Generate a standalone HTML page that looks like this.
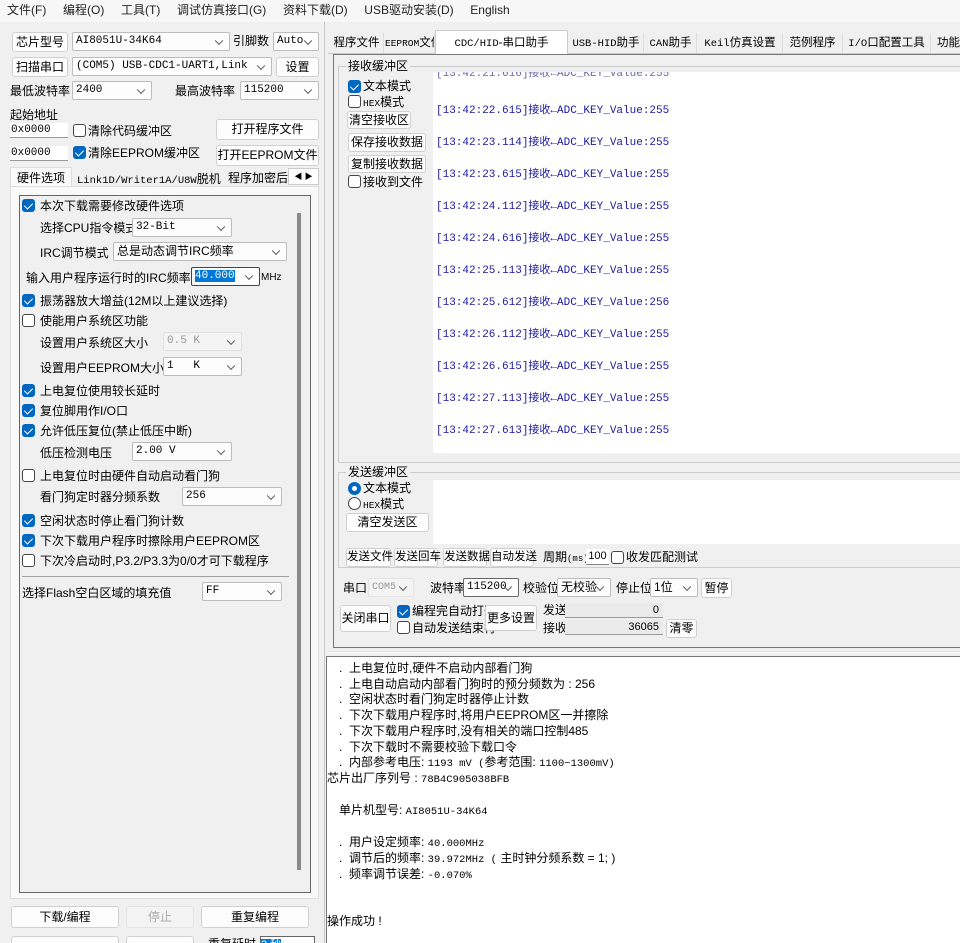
<!DOCTYPE html>
<html><head><meta charset="utf-8"><style>
*{margin:0;padding:0;box-sizing:border-box}
html,body{width:960px;height:943px;overflow:hidden}
body{background:#f0f0f0;font-family:"Liberation Sans","Noto Sans CJK SC",sans-serif;font-size:12px;color:#000;position:relative}
.a{position:absolute;white-space:nowrap;line-height:14px}
.btn{position:absolute;background:#fdfdfd;border:1px solid #d0d0d0;border-radius:3px;text-align:center;white-space:nowrap;font-size:12px}
.cb{position:absolute;background:#fdfdfd;border:1px solid #bcbcbc;border-radius:2px;font-family:"Liberation Mono","Noto Sans CJK SC",monospace;font-size:11px;padding-left:3px;white-space:nowrap;overflow:hidden}
.cb:after{content:"";position:absolute;right:7px;top:50%;width:5px;height:5px;border-right:1px solid #555;border-bottom:1px solid #555;transform:translateY(-70%) rotate(45deg)}
.ck{position:absolute;width:13px;height:13px;border:1px solid #444;border-radius:3px;background:#fff}
.ck.on{background:#0067c0;border-color:#0067c0}
.ck.on:after{content:"";position:absolute;left:3px;top:1px;width:4px;height:7px;border-right:1.5px solid #fff;border-bottom:1.5px solid #fff;transform:rotate(45deg)}
.ed{position:absolute;background:#fff;border-bottom:1px solid #999;font-family:"Liberation Mono","Noto Sans CJK SC",monospace;font-size:11px;padding-left:1px;line-height:14px}
.tab{position:absolute;top:33px;height:20px;line-height:20px;font-size:11.5px;text-align:center;border-right:1px solid #ddd;white-space:nowrap;overflow:hidden}
.rl{position:absolute;left:436px;color:#1a1a9e;font-family:"Liberation Mono","Noto Sans CJK SC",monospace;font-size:11px;white-space:nowrap}
.lg{position:absolute;white-space:nowrap;font-size:12px;line-height:15px}
.m{font-family:"Liberation Mono","Noto Sans CJK SC",monospace;font-size:10.5px}
</style></head><body>
<div class="a" style="left:0;top:0;width:960px;height:22px;background:#f7f7f7"></div>
<div class="a" style="left:7px;top:3px;font-size:12px;color:#222">文件(F)&nbsp;&nbsp;&nbsp;&nbsp;&nbsp;编程(O)&nbsp;&nbsp;&nbsp;&nbsp;&nbsp;工具(T)&nbsp;&nbsp;&nbsp;&nbsp;&nbsp;调试仿真接口(G)&nbsp;&nbsp;&nbsp;&nbsp;&nbsp;资料下载(D)&nbsp;&nbsp;&nbsp;&nbsp;&nbsp;USB驱动安装(D)&nbsp;&nbsp;&nbsp;&nbsp;&nbsp;English</div>

<div class="btn" style="left:12px;top:32px;width:56px;height:20px;line-height:18px">芯片型号</div>
<div class="cb" style="left:72px;top:32px;width:158px;height:19px;line-height:17px">AI8051U-34K64</div>
<div class="a" style="left:233px;top:34px">引脚数</div>
<div class="cb" style="left:273px;top:32px;width:46px;height:19px;line-height:17px">Auto</div>
<div class="btn" style="left:12px;top:57px;width:56px;height:20px;line-height:18px">扫描串口</div>
<div class="cb" style="left:72px;top:57px;width:200px;height:19px;line-height:17px">(COM5) USB-CDC1-UART1,Link</div>
<div class="btn" style="left:276px;top:57px;width:43px;height:20px;line-height:18px">设置</div>
<div class="a" style="left:10px;top:84px">最低波特率</div>
<div class="cb" style="left:72px;top:81px;width:80px;height:19px;line-height:17px">2400</div>
<div class="a" style="left:175px;top:84px">最高波特率</div>
<div class="cb" style="left:240px;top:81px;width:79px;height:19px;line-height:17px">115200</div>
<div class="a" style="left:10px;top:108px">起始地址</div>
<div class="ed" style="left:10px;top:123px;width:58px;height:15px">0x0000</div>
<div class="ck" style="left:73px;top:124px"></div>
<div class="a" style="left:88px;top:124px">清除代码缓冲区</div>
<div class="btn" style="left:216px;top:119px;width:103px;height:21px;line-height:19px">打开程序文件</div>
<div class="ed" style="left:10px;top:146px;width:58px;height:15px">0x0000</div>
<div class="ck on" style="left:73px;top:146px"></div>
<div class="a" style="left:88px;top:146px">清除EEPROM缓冲区</div>
<div class="btn" style="left:216px;top:145px;width:103px;height:21px;line-height:19px">打开EEPROM文件</div>
<div class="a" style="left:10px;top:167px;width:62px;height:20px;background:#f9f9f9;border:1px solid #ddd;border-bottom:none"></div>
<div class="a" style="left:17px;top:171px">硬件选项</div>
<div class="a" style="left:77px;top:172px"><span class="m">Link1D/Writer1A/U8W</span>脱机</div>
<div class="a" style="left:228px;top:171px;width:60px;overflow:hidden">程序加密后</div>
<div class="a" style="left:288px;top:168px;width:31px;height:17px;background:#fff;border:1px solid #ccc;font-size:8px;line-height:15px;text-align:center">◀ ▶</div>
<div class="a" style="left:10px;top:186px;width:309px;height:713px;border:1px solid #ddd;background:#f9f9f9"></div>
<div class="a" style="left:19px;top:195px;width:292px;height:698px;border:1px solid #666;background:#f0f0f0"></div>
<div class="a" style="left:297px;top:213px;width:4px;height:657px;background:#8a8a8a"></div>
<div class="ck on" style="left:22px;top:199px"></div><div class="a" style="left:40px;top:199px">本次下载需要修改硬件选项</div>
<div class="a" style="left:40px;top:221px">选择CPU指令模式</div><div class="cb" style="left:132px;top:218px;width:100px;height:19px;line-height:17px">32-Bit</div>
<div class="a" style="left:40px;top:246px">IRC调节模式</div><div class="cb" style="left:113px;top:242px;width:174px;height:19px;line-height:17px;font-family:'Liberation Sans','Noto Sans CJK SC',sans-serif;font-size:12px">总是动态调节IRC频率</div>
<div class="a" style="left:26px;top:271px">输入用户程序运行时的IRC频率</div>
<div class="cb" style="left:191px;top:267px;width:69px;height:19px;line-height:17px;border-color:#444"><span style="background:#0078d7;color:#fff">40.000</span></div>
<div class="a" style="left:261px;top:271px;font-size:10px">MHz</div>
<div class="ck on" style="left:22px;top:294px"></div><div class="a" style="left:40px;top:294px">振荡器放大增益(12M以上建议选择)</div>
<div class="ck" style="left:22px;top:314px"></div><div class="a" style="left:40px;top:314px">使能用户系统区功能</div>
<div class="a" style="left:40px;top:336px">设置用户系统区大小</div><div class="cb" style="left:163px;top:332px;width:79px;height:19px;line-height:17px;color:#999;border-color:#e0e0e0;background:#f4f4f4">0.5 K</div>
<div class="a" style="left:40px;top:361px">设置用户EEPROM大小</div><div class="cb" style="left:163px;top:357px;width:79px;height:19px;line-height:17px">1&nbsp;&nbsp;&nbsp;K</div>
<div class="ck on" style="left:22px;top:384px"></div><div class="a" style="left:40px;top:384px">上电复位使用较长延时</div>
<div class="ck on" style="left:22px;top:404px"></div><div class="a" style="left:40px;top:404px">复位脚用作I/O口</div>
<div class="ck on" style="left:22px;top:424px"></div><div class="a" style="left:40px;top:424px">允许低压复位(禁止低压中断)</div>
<div class="a" style="left:40px;top:446px">低压检测电压</div><div class="cb" style="left:132px;top:442px;width:100px;height:19px;line-height:17px">2.00 V</div>
<div class="ck" style="left:22px;top:469px"></div><div class="a" style="left:40px;top:469px">上电复位时由硬件自动启动看门狗</div>
<div class="a" style="left:40px;top:490px">看门狗定时器分频系数</div><div class="cb" style="left:182px;top:487px;width:100px;height:19px;line-height:17px">256</div>
<div class="ck on" style="left:22px;top:514px"></div><div class="a" style="left:40px;top:514px">空闲状态时停止看门狗计数</div>
<div class="ck on" style="left:22px;top:534px"></div><div class="a" style="left:40px;top:534px">下次下载用户程序时擦除用户EEPROM区</div>
<div class="ck" style="left:22px;top:554px"></div><div class="a" style="left:40px;top:554px">下次冷启动时,P3.2/P3.3为0/0才可下载程序</div>
<div class="a" style="left:22px;top:576px;width:267px;height:1px;background:#a0a0a0"></div>
<div class="a" style="left:22px;top:586px">选择Flash空白区域的填充值</div><div class="cb" style="left:202px;top:582px;width:80px;height:19px;line-height:17px">FF</div>
<div class="btn" style="left:11px;top:906px;width:108px;height:22px;line-height:20px">下载/编程</div>
<div class="btn" style="left:126px;top:906px;width:68px;height:22px;line-height:20px;color:#aaa;border-color:#e4e4e4;background:#f4f4f4">停止</div>
<div class="btn" style="left:201px;top:906px;width:108px;height:22px;line-height:20px">重复编程</div>
<div class="btn" style="left:11px;top:936px;width:108px;height:22px"></div>
<div class="btn" style="left:126px;top:936px;width:68px;height:22px"></div>
<div class="a" style="left:208px;top:937px">重复延时</div>
<div class="a" style="left:260px;top:936px;width:55px;height:16px;background:#fff;border:1px solid #666"><span style="background:#0078d7;color:#fff;font-size:11px">3 秒</span></div>
<div class="a" style="left:324px;top:22px;width:1px;height:921px;background:#c8c8c8"></div>

<div class="a" style="left:328px;top:53px;width:632px;height:1px;background:#ccc"></div>
<div class="tab" style="left:330px;width:54px">程序文件</div>
<div class="tab" style="left:385px;width:50px"><span class="m" style="font-size:9.5px">EEPROM</span>文件</div>
<div class="tab" style="left:435px;top:30px;height:24px;line-height:24px;width:133px;background:#fff;border:1px solid #ccc;border-bottom:none"><span class="m">CDC/HID</span>-串口助手</div>
<div class="tab" style="left:569px;width:75px"><span class="m">USB-HID</span>助手</div>
<div class="tab" style="left:645px;width:52px"><span class="m">CAN</span>助手</div>
<div class="tab" style="left:698px;width:85px"><span class="m">Keil</span>仿真设置</div>
<div class="tab" style="left:783px;width:60px">范例程序</div>
<div class="tab" style="left:843px;width:88px"><span class="m">I/O</span>口配置工具</div>
<div class="tab" style="left:932px;width:40px;border:none;text-align:left;padding-left:5px">功能</div>
<div class="a" style="left:333px;top:54px;width:640px;height:594px;border:1px solid #777;border-right:none;background:#f0f0f0"></div>
<div class="a" style="left:338px;top:66px;width:630px;height:397px;border:1px solid #ccc;border-right:none"></div>
<div class="a" style="left:346px;top:59px;background:#f0f0f0;padding:0 2px">接收缓冲区</div>
<div class="a" style="left:433px;top:72px;width:527px;height:381px;background:#fff;overflow:hidden">
<div class="rl" style="left:3px;top:-5px;color:#6a6aaa">[13:42:21.616]接收←ADC_KEY_Value:255</div>
</div>
<div class="rl" style="top:101px">[13:42:22.615]接收←ADC_KEY_Value:255</div>
<div class="rl" style="top:133px">[13:42:23.114]接收←ADC_KEY_Value:255</div>
<div class="rl" style="top:165px">[13:42:23.615]接收←ADC_KEY_Value:255</div>
<div class="rl" style="top:197px">[13:42:24.112]接收←ADC_KEY_Value:255</div>
<div class="rl" style="top:229px">[13:42:24.616]接收←ADC_KEY_Value:255</div>
<div class="rl" style="top:261px">[13:42:25.113]接收←ADC_KEY_Value:255</div>
<div class="rl" style="top:293px">[13:42:25.612]接收←ADC_KEY_Value:256</div>
<div class="rl" style="top:325px">[13:42:26.112]接收←ADC_KEY_Value:255</div>
<div class="rl" style="top:357px">[13:42:26.615]接收←ADC_KEY_Value:255</div>
<div class="rl" style="top:389px">[13:42:27.113]接收←ADC_KEY_Value:255</div>
<div class="rl" style="top:421px">[13:42:27.613]接收←ADC_KEY_Value:255</div>
<div class="ck on" style="left:348px;top:80px"></div><div class="a" style="left:363px;top:79px">文本模式</div>
<div class="ck" style="left:348px;top:95px"></div><div class="a" style="left:363px;top:95px"><span class="m" style="font-size:9.5px">HEX</span>模式</div>
<div class="btn" style="left:347px;top:111px;width:64px;height:18px;line-height:16px">清空接收区</div>
<div class="btn" style="left:348px;top:133px;width:78px;height:19px;line-height:17px">保存接收数据</div>
<div class="btn" style="left:348px;top:155px;width:78px;height:18px;line-height:16px">复制接收数据</div>
<div class="ck" style="left:348px;top:175px"></div><div class="a" style="left:363px;top:175px">接收到文件</div>
<div class="a" style="left:338px;top:472px;width:630px;height:96px;border:1px solid #ccc;border-right:none"></div>
<div class="a" style="left:346px;top:465px;background:#f0f0f0;padding:0 2px">发送缓冲区</div>
<div class="a" style="left:348px;top:482px;width:13px;height:13px;border-radius:50%;background:#0067c0"><div style="position:absolute;left:4px;top:4px;width:5px;height:5px;border-radius:50%;background:#fff"></div></div>
<div class="a" style="left:363px;top:481px">文本模式</div>
<div class="a" style="left:348px;top:497px;width:13px;height:13px;border-radius:50%;border:1px solid #444;background:#fff"></div>
<div class="a" style="left:363px;top:497px"><span class="m" style="font-size:9.5px">HEX</span>模式</div>
<div class="btn" style="left:346px;top:513px;width:83px;height:19px;line-height:17px">清空发送区</div>
<div class="a" style="left:433px;top:480px;width:527px;height:64px;background:#fff"></div>
<div class="btn" style="left:346px;top:548px;width:45px;height:19px;line-height:17px;font-size:11.5px">发送文件</div>
<div class="btn" style="left:394px;top:548px;width:44px;height:19px;line-height:17px;font-size:11.5px">发送回车</div>
<div class="btn" style="left:443px;top:548px;width:44px;height:19px;line-height:17px;font-size:11.5px">发送数据</div>
<div class="btn" style="left:490px;top:548px;width:44px;height:19px;line-height:17px;font-size:11.5px">自动发送</div>
<div class="a" style="left:543px;top:550px">周期<span class="m" style="font-size:9px">(ms)</span></div>
<div class="a" style="left:586px;top:549px;width:23px;height:16px;background:#fff;border-bottom:1px solid #888;font-size:11px;text-align:center">100</div>
<div class="ck" style="left:611px;top:551px"></div><div class="a" style="left:626px;top:550px">收发匹配测试</div>
<div class="a" style="left:343px;top:581px">串口</div>
<div class="cb" style="left:368px;top:578px;width:46px;height:19px;line-height:17px;color:#999;border-color:#e4e4e4;background:#f4f4f4;font-size:10px">COM5</div>
<div class="a" style="left:430px;top:581px">波特率</div>
<div class="cb" style="left:463px;top:578px;width:56px;height:19px;line-height:17px;border-color:#666">115200</div>
<div class="a" style="left:523px;top:581px">校验位</div>
<div class="cb" style="left:557px;top:578px;width:54px;height:19px;line-height:17px;font-family:'Liberation Sans','Noto Sans CJK SC',sans-serif;font-size:12px">无校验</div>
<div class="a" style="left:616px;top:581px">停止位</div>
<div class="cb" style="left:650px;top:578px;width:48px;height:19px;line-height:17px;font-family:'Liberation Sans','Noto Sans CJK SC',sans-serif;font-size:12px">1位</div>
<div class="btn" style="left:701px;top:578px;width:31px;height:20px;line-height:18px">暂停</div>
<div class="btn" style="left:340px;top:605px;width:51px;height:27px;line-height:25px">关闭串口</div>
<div class="ck on" style="left:397px;top:605px"></div><div class="a" style="left:412px;top:604px">编程完自动打开</div>
<div class="ck" style="left:397px;top:621px"></div><div class="a" style="left:412px;top:621px">自动发送结束符</div>
<div class="btn" style="left:485px;top:605px;width:52px;height:26px;line-height:24px">更多设置</div>
<div class="a" style="left:543px;top:603px">发送</div>
<div class="a" style="left:565px;top:603px;width:98px;height:15px;background:#eaeaea;border-bottom:1px solid #999;text-align:right;padding-right:4px;font-size:11px;line-height:14px">0</div>
<div class="a" style="left:543px;top:621px">接收</div>
<div class="a" style="left:565px;top:620px;width:98px;height:15px;background:#eaeaea;border-bottom:1px solid #999;text-align:right;padding-right:4px;font-size:11px;line-height:14px">36065</div>
<div class="btn" style="left:666px;top:619px;width:31px;height:19px;line-height:17px">清零</div>
<div class="a" style="left:328px;top:651px;width:632px;height:2px;border-top:1px solid #cfe0ef;border-bottom:1px solid #fff"></div>
<div class="a" style="left:326px;top:656px;width:640px;height:290px;background:#fff;border:1px solid #777;border-right:none"></div>
<div class="lg" style="left:339px;top:661px">.&nbsp;&nbsp;上电复位时,硬件不启动内部看门狗</div>
<div class="lg" style="left:339px;top:677px">.&nbsp;&nbsp;上电自动启动内部看门狗时的预分频数为 : 256</div>
<div class="lg" style="left:339px;top:692px">.&nbsp;&nbsp;空闲状态时看门狗定时器停止计数</div>
<div class="lg" style="left:339px;top:708px">.&nbsp;&nbsp;下次下载用户程序时,将用户EEPROM区一并擦除</div>
<div class="lg" style="left:339px;top:724px">.&nbsp;&nbsp;下次下载用户程序时,没有相关的端口控制485</div>
<div class="lg" style="left:339px;top:740px">.&nbsp;&nbsp;下次下载时不需要校验下载口令</div>
<div class="lg" style="left:339px;top:755px">.&nbsp;&nbsp;内部参考电压: <span class="m">1193 mV (</span>参考范围: <span class="m">1100~1300mV)</span></div>
<div class="lg" style="left:327px;top:771px">芯片出厂序列号 : <span class="m">78B4C905038BFB</span></div>
<div class="lg" style="left:339px;top:803px">单片机型号: <span class="m">AI8051U-34K64</span></div>
<div class="lg" style="left:339px;top:835px">.&nbsp;&nbsp;用户设定频率: <span class="m">40.000MHz</span></div>
<div class="lg" style="left:339px;top:851px">.&nbsp;&nbsp;调节后的频率: <span class="m">39.972MHz (</span> 主时钟分频系数 = 1; )</div>
<div class="lg" style="left:339px;top:867px">.&nbsp;&nbsp;频率调节误差: <span class="m">-0.070%</span></div>
<div class="lg" style="left:327px;top:914px">操作成功 !</div>
</body></html>
